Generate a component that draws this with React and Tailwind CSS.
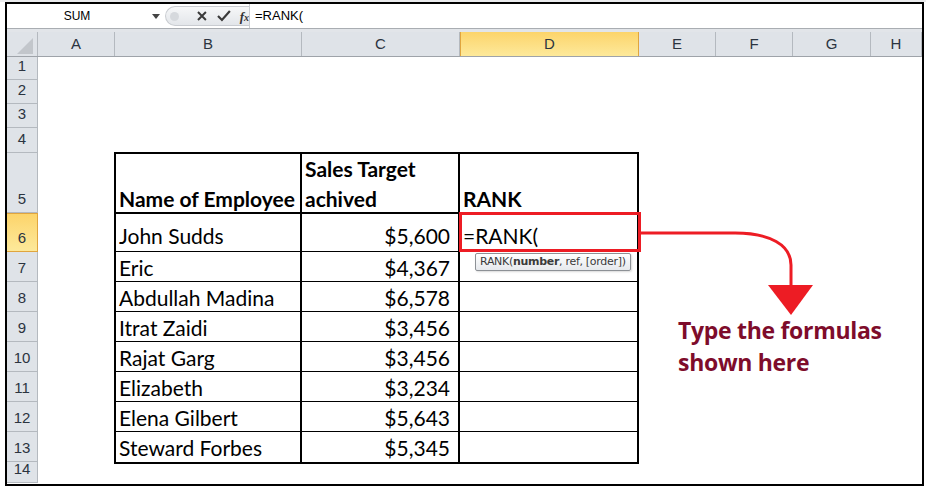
import { useMemo } from "react";

const cols = [
  { key: "A", w: 77 },
  { key: "B", w: 187 },
  { key: "C", w: 158 },
  { key: "D", w: 179, active: true },
  { key: "E", w: 77 },
  { key: "F", w: 77 },
  { key: "G", w: 78 },
  { key: "H", w: 51 },
];

const rowHeights = [23, 24, 24, 25, 60, 39, 30, 30, 30, 30, 30, 30, 30, 21];

const employees = [
  { name: "John Sudds", sales: "$5,600" },
  { name: "Eric", sales: "$4,367" },
  { name: "Abdullah Madina", sales: "$6,578" },
  { name: "Itrat Zaidi", sales: "$3,456" },
  { name: "Rajat Garg", sales: "$3,456" },
  { name: "Elizabeth", sales: "$3,234" },
  { name: "Elena Gilbert", sales: "$5,643" },
  { name: "Steward Forbes", sales: "$5,345" },
];

const cellFont = { fontFamily: "Lato, 'Open Sans', sans-serif" };

function FormulaBar() {
  return (
    <div className="flex h-[25px] items-stretch border-b border-[#a9adb2] bg-white">
      <div className="flex w-[140px] items-center justify-center text-[12px] text-black font-['Liberation_Sans',sans-serif]">
        SUM
      </div>
      <div className="flex w-[18px] items-center justify-center">
        <svg width="8" height="5" viewBox="0 0 8 5">
          <path d="M0 0h8L4 5z" fill="#444" />
        </svg>
      </div>
      <div className="my-[2px] flex w-[84px] items-center gap-[9px] rounded-l-full border border-r-0 border-[#c9ccd1] bg-gradient-to-b from-[#f6f7f8] to-[#e3e6ea] pl-[4px]">
        <span className="h-[9px] w-[9px] rounded-full bg-[#d6d9dd]" />
        <svg width="12" height="12" viewBox="0 0 12 12" className="ml-[8px]">
          <path d="M2 2l8 8M10 2l-8 8" stroke="#3a3a3a" strokeWidth="2" />
        </svg>
        <svg width="14" height="12" viewBox="0 0 14 12">
          <path d="M1 6l4 4 8-9" stroke="#3a3a3a" strokeWidth="2.2" fill="none" />
        </svg>
        <span className="italic font-bold text-[13px] leading-none text-[#333] font-['Liberation_Serif',serif]">
          f<span className="text-[10px]">x</span>
        </span>
      </div>
      <div className="w-px bg-[#c9ccd1]" />
      <div className="flex items-center pl-[5px] text-[13px] text-black font-['Liberation_Sans',sans-serif]">
        =RANK(
      </div>
    </div>
  );
}

function ColumnHeaders() {
  return (
    <div className="flex h-[25px] border-b border-[#9ea3a9] bg-[#dfe3e8] text-[15px] text-[#2b3440] font-['Liberation_Sans',sans-serif]">
      <div className="relative w-[31px] border-r border-[#b4b9bf]">
        <svg width="16" height="16" viewBox="0 0 16 16" className="absolute bottom-[2px] right-[4px]">
          <path d="M16 0v16H0z" fill="#c2c6cb" />
        </svg>
      </div>
      {cols.map((c) => (
        <div
          key={c.key}
          style={{ width: c.w }}
          className={
            c.active
              ? "flex items-center justify-center border-x border-[#e0a53e] bg-gradient-to-b from-[#fcd46a] to-[#fde99a]"
              : "flex items-center justify-center border-r border-[#b4b9bf]"
          }
        >
          {c.key}
        </div>
      ))}
    </div>
  );
}

function RowHeaders() {
  return (
    <div className="flex w-[31px] flex-col bg-[#dfe3e8] text-[15px] text-[#2b3440] font-['Liberation_Sans',sans-serif]">
      {rowHeights.map((h, i) => (
        <div
          key={i}
          style={{ height: h }}
          className={
            i === 5
              ? "flex items-end justify-center border-y border-r border-[#e0a53e] bg-gradient-to-b from-[#fcd46a] to-[#fde99a] pb-[2px]"
              : "flex items-end justify-center border-b border-r border-[#b4b9bf] pb-[2px]"
          }
        >
          {i + 1}
        </div>
      ))}
    </div>
  );
}

function SalesTable() {
  return (
    <div
      className="grid w-[525px] border-2 border-black text-[21px] text-black"
      style={cellFont}
    >
      <div className="grid h-[60px] grid-cols-[186px_158px_177px] border-b-2 border-black font-bold leading-[30px]">
        <div className="flex items-end border-r-2 border-black pl-[3px]">Name of Employee</div>
        <div className="flex flex-col justify-end border-r-2 border-black pl-[3px]">
          <span>Sales Target</span>
          <span>achived</span>
        </div>
        <div className="flex items-end pl-[3px]">RANK</div>
      </div>
      {employees.map((e, i) => (
        <div
          key={e.name}
          className={
            "grid grid-cols-[186px_158px_177px] " +
            (i === 0 ? "h-[38px] " : "h-[30px] ") +
            (i < employees.length - 1 ? "border-b border-black" : "")
          }
        >
          <div className="flex items-end border-r-2 border-black pl-[3px]">{e.name}</div>
          <div className="flex items-end justify-end border-r-2 border-black pr-[8px]">
            {e.sales}
          </div>
          <div className="flex items-end pl-[3px]">{i === 0 ? "=RANK(" : ""}</div>
        </div>
      ))}
    </div>
  );
}

function Annotation() {
  return (
    <>
      <div className="absolute left-[452px] top-[208px] h-[40px] w-[182px] border-[3px] border-[#ed1c24]" />
      <svg
        width="926"
        height="489"
        className="pointer-events-none absolute left-[-7px] top-[-4px]"
      >
        <path
          d="M641 233 H735 C770 233 791 245 791 265 V286"
          stroke="#ed1c24"
          strokeWidth="3"
          fill="none"
        />
        <path d="M768 285 H813 L791 315 Z" fill="#ed1c24" />
      </svg>
      <div className="absolute left-[468px] top-[249px] flex h-[18px] items-center rounded-[2px] border border-[#8d9196] bg-gradient-to-b from-white to-[#e6e9ed] px-[4px] text-[11px] text-[#3b3b3b] shadow-[1px_1px_2px_rgba(0,0,0,0.15)] font-['DejaVu_Sans',sans-serif] tracking-[-0.3px]">
        RANK(<b>number</b>, ref, [order])
      </div>
      <div className="absolute left-[671px] top-[310px] text-[23px] font-bold leading-[32px] text-[#7e0c2b] font-['Open_Sans',sans-serif] tracking-[-0.3px]">
        Type the formulas
        <br />
        shown here
      </div>
    </>
  );
}

export default function App() {
  const sheetW = useMemo(() => cols.reduce((s, c) => s + c.w, 31), []);
  return (
    <div className="h-[489px] w-[926px] overflow-hidden bg-white">
      <div className="h-[2px] bg-[#e9eaec]" />
      <div
        className="relative ml-[5px] h-[484px] overflow-hidden border-2 border-black bg-white"
        style={{ width: sheetW + 4 }}
      >
        <FormulaBar />
        <div className="h-[3px] bg-[#e2e5e9]" />
        <ColumnHeaders />
        <div className="flex">
          <RowHeaders />
          <div className="flex-1 pl-[76px] pt-[95px]">
            <SalesTable />
          </div>
        </div>
        <Annotation />
      </div>
    </div>
  );
}
